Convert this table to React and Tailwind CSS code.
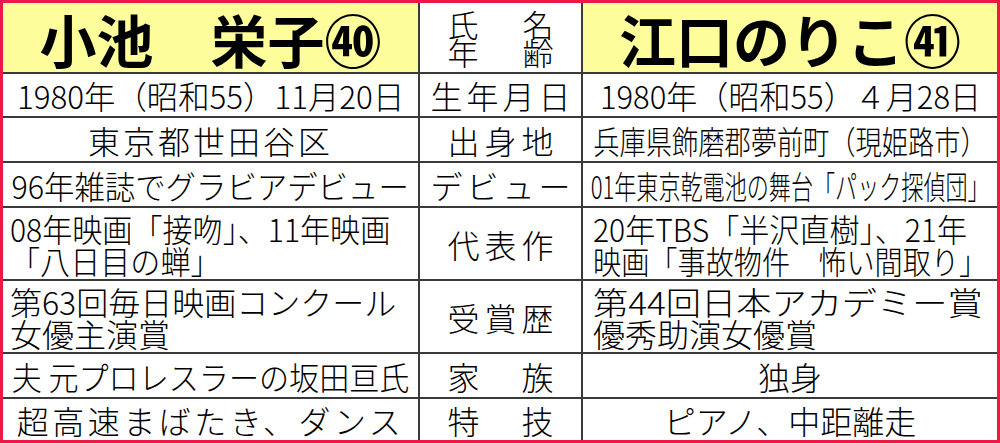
import React from "react";

// 小池栄子 × 江口のりこ プロフィール比較表
const YELLOW = "bg-[#fdfd9b]";

const Fit = ({ children, scale = "", origin = "origin-center" }) => (
  <span className={`inline-block whitespace-nowrap ${origin} ${scale}`}>{children}</span>
);

// 中央列の見出し（均等割り）
const Label = ({ chars, w }) => (
  <div className="flex h-full items-center justify-center bg-white">
    <div className={`flex justify-between text-[32px] leading-none ${w}`}>
      {chars.map((c) => (
        <span key={c}>{c}</span>
      ))}
    </div>
  </div>
);

const One = ({ children, scale, extra = "" }) => (
  <div className="flex h-full items-center justify-center overflow-hidden bg-white text-[32px] leading-none">
    <Fit scale={`${scale} ${extra}`}>{children}</Fit>
  </div>
);

const Two = ({ lines, pad }) => (
  <div className={`flex h-full flex-col justify-center overflow-hidden bg-white text-[32px] leading-[32px] ${pad}`}>
    {lines.map(([text, scale]) => (
      <div key={text}>
        <Fit scale={scale} origin="origin-left">
          {text}
        </Fit>
      </div>
    ))}
  </div>
);

export default function App() {
  return (
    <div className="h-[443px] w-[1000px] border-[3px] border-[#ec1846] bg-[#3a3a3a] font-['Noto_Sans_CJK_JP','Noto_Sans',sans-serif] font-light text-black">
      <div className="grid h-full grid-cols-[415px_161px_414px] grid-rows-[69px_42px_43px_43px_71px_71px_43px_41px] gap-[2px]">
        {/* 名前 */}
        <div className={`flex items-center justify-center ${YELLOW} text-[57px] font-bold leading-[64px]`}>
          小池　栄子㊵
        </div>
        <div className="flex flex-col items-center justify-center bg-white text-[31px] leading-[28px]">
          <div className="flex w-[106px] justify-between">
            <span>氏</span>
            <span>名</span>
          </div>
          <div className="flex w-[106px] justify-between">
            <span>年</span>
            <span>齢</span>
          </div>
        </div>
        <div className={`flex items-center justify-center ${YELLOW} text-[57px] font-bold leading-[64px]`}>
          江口のりこ㊶
        </div>

        {/* 生年月日 */}
        <One scale="scale-x-[0.98]">1980年（昭和55）11月20日</One>
        <Label chars={["生", "年", "月", "日"]} w="w-[140px]" />
        <One scale="scale-x-[0.97]">1980年（昭和55）４月28日</One>

        {/* 出身地 */}
        <One scale="" extra="tracking-[3px]">東京都世田谷区</One>
        <Label chars={["出", "身", "地"]} w="w-[106px]" />
        <One scale="scale-x-[0.82]">兵庫県飾磨郡夢前町（現姫路市）</One>

        {/* デビュー */}
        <One scale="scale-x-[0.95]">96年雑誌でグラビアデビュー</One>
        <Label chars={["デ", "ビ", "ュ", "ー"]} w="w-[140px]" />
        <One scale="scale-x-[0.69]">01年東京乾電池の舞台「パック探偵団」</One>

        {/* 代表作 */}
        <Two
          pad="pl-[7px]"
          lines={[
            ["08年映画「接吻」、11年映画", "scale-x-[0.94]"],
            ["「八日目の蝉」", "scale-x-[0.94]"],
          ]}
        />
        <Label chars={["代", "表", "作"]} w="w-[106px]" />
        <Two
          pad="pl-[10px]"
          lines={[
            ["20年TBS「半沢直樹」、21年", "scale-x-[0.94]"],
            ["映画「事故物件　怖い間取り」", "scale-x-[0.88]"],
          ]}
        />

        {/* 受賞歴 */}
        <Two
          pad="pl-[7px]"
          lines={[
            ["第63回毎日映画コンクール", "scale-x-[1]"],
            ["女優主演賞", "scale-x-[1]"],
          ]}
        />
        <Label chars={["受", "賞", "歴"]} w="w-[106px]" />
        <Two
          pad="pl-[10px]"
          lines={[
            ["第44回日本アカデミー賞", "scale-x-[1.1]"],
            ["優秀助演女優賞", "scale-x-[1]"],
          ]}
        />

        {/* 家族 */}
        <One scale="scale-x-[0.94]">夫 元プロレスラーの坂田亘氏</One>
        <Label chars={["家", "族"]} w="w-[106px]" />
        <One scale="">独身</One>

        {/* 特技 */}
        <One scale="" extra="tracking-[3.5px]">超高速まばたき、ダンス</One>
        <Label chars={["特", "技"]} w="w-[106px]" />
        <One scale="">ピアノ、中距離走</One>
      </div>
    </div>
  );
}
